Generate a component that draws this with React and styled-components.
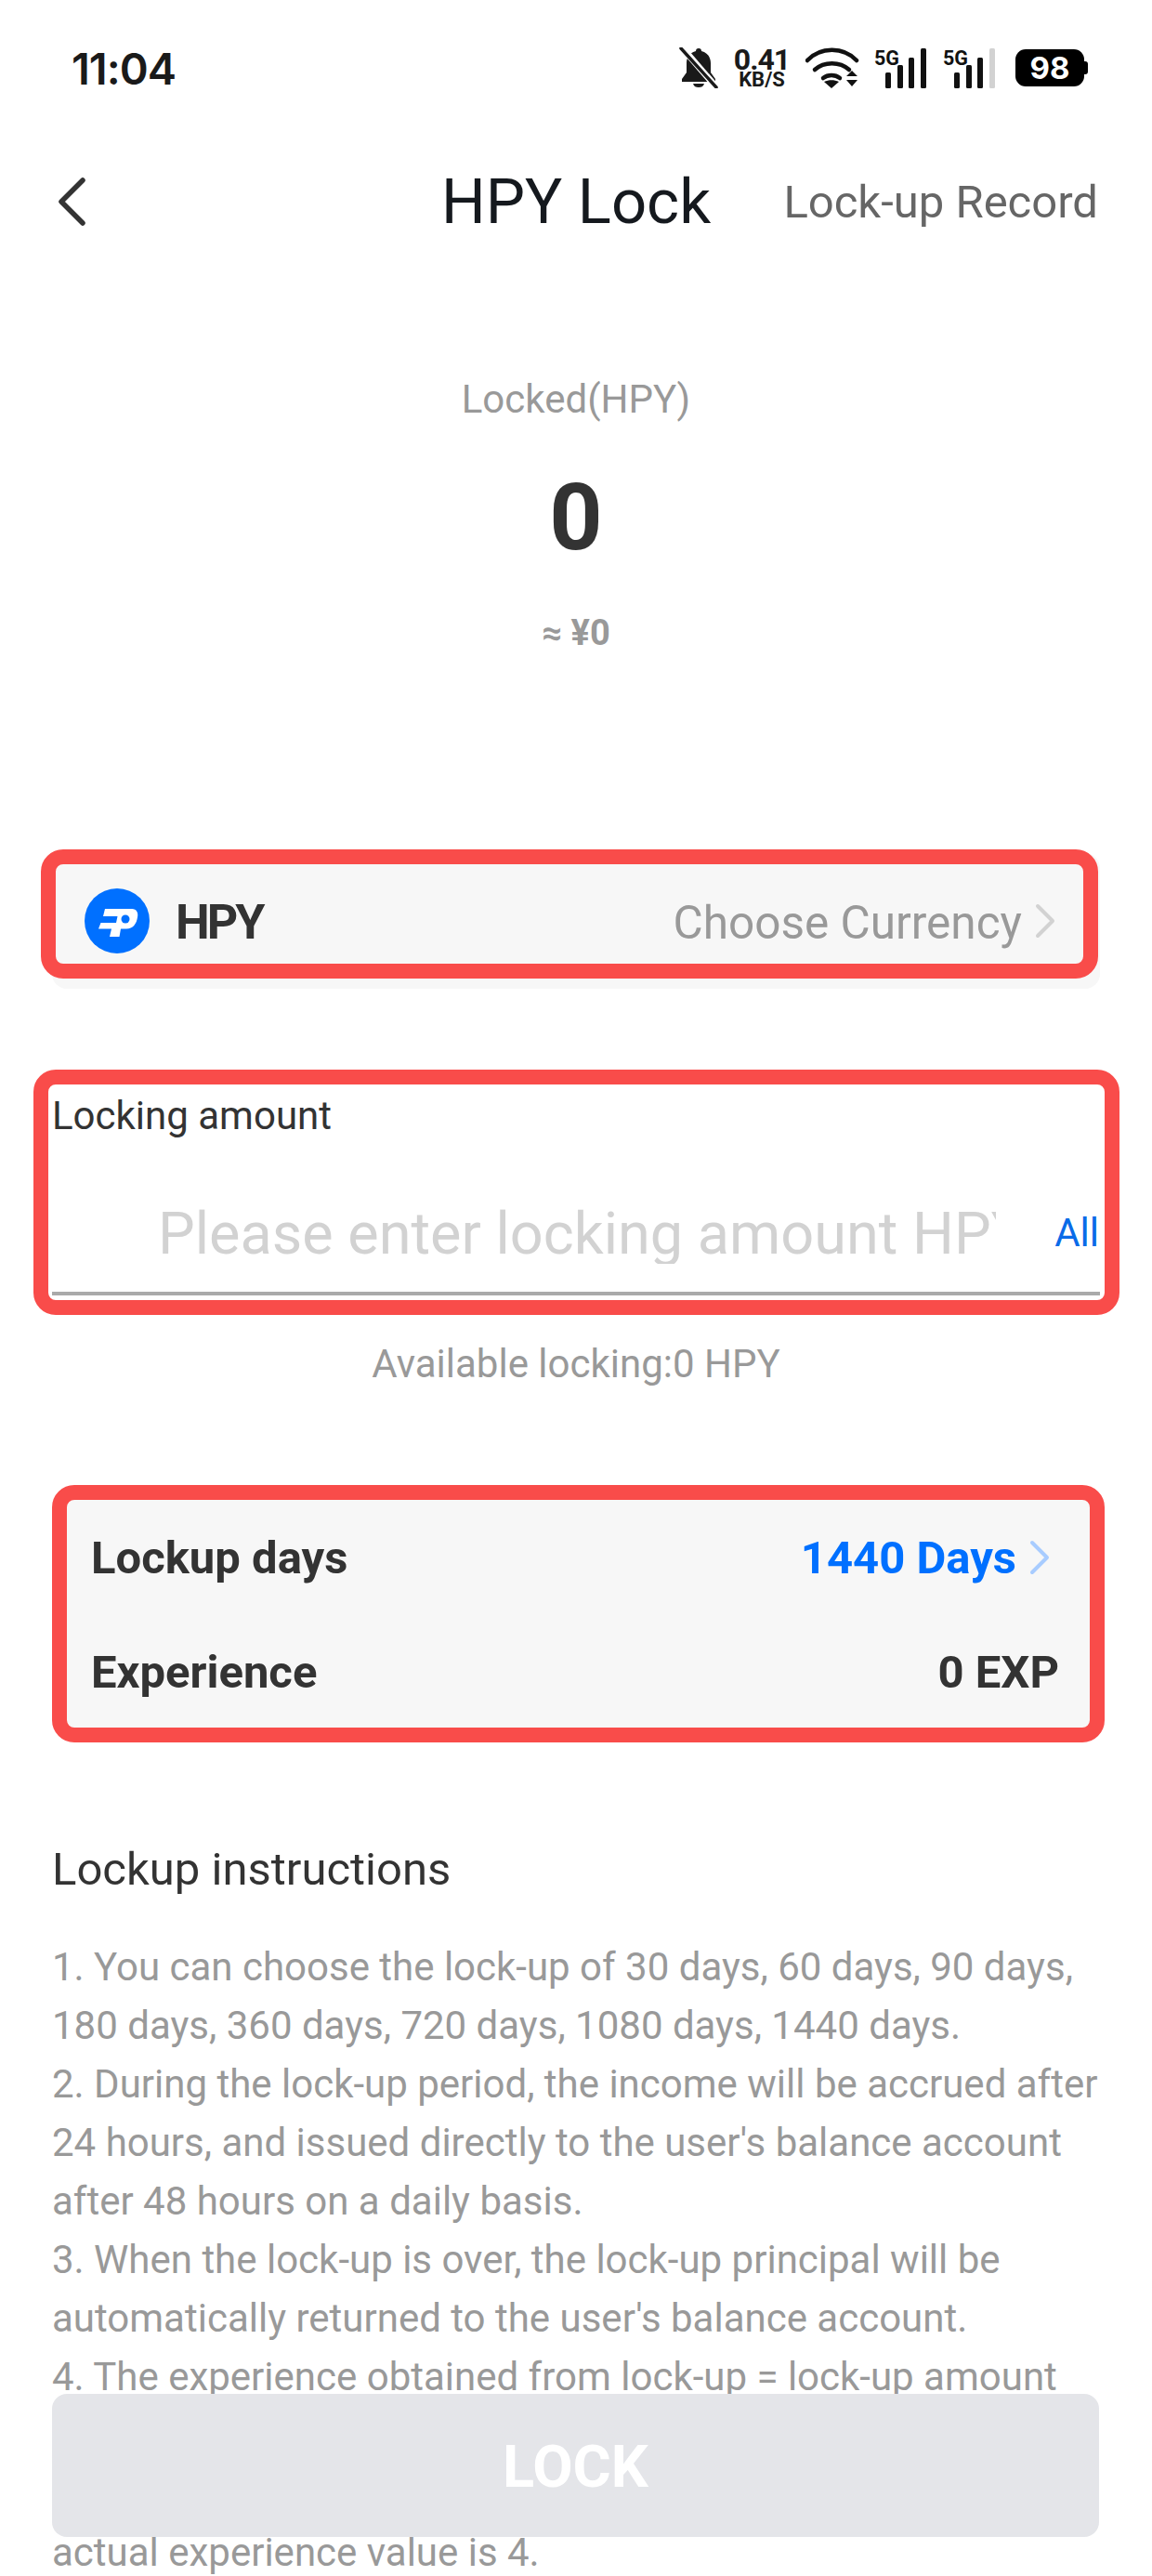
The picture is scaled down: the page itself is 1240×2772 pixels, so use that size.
import styled, { createGlobalStyle } from 'styled-components';

const GlobalStyle = createGlobalStyle`
	html, body {
		margin: 0;
		padding: 0;
		background: #fff;
	}
	* {
		box-sizing: border-box;
	}
`;

const BellOff = () => (
	<svg width="42" height="44" viewBox="0 0 42 44">
		<path d="M21 1c2 0 3 1 3 3 6 1.500 10 6 10 13v10l5 7v3H3v-3l5-7V17C8 10 12 5.500 18 4c0-2 1-3 3-3z" fill="#1a1a1a" />
		<path d="M15 39h12c-1 3-3 4-6 4s-5-1-6-4z" fill="#1a1a1a" />
		<path d="M3 0l38 44" stroke="#fff" strokeWidth="7" />
		<path d="M2 1l38 42" stroke="#1a1a1a" strokeWidth="3.500" strokeLinecap="round" />
	</svg>
);

const Wifi = () => (
	<svg width="58" height="44" viewBox="0 0 58 44">
		<g fill="none" stroke="#111" strokeWidth="4.500" strokeLinecap="round">
			<path d="M2 14C16-1 41-1 55 14" />
			<path d="M10 24c10-9 27-9 37 0" />
			<path d="M19 33c5-4 13-4 18 0" />
		</g>
		<path d="M20 37c5-2.500 11-2.500 16 0l-8 7z" fill="#111" />
		<path d="M50 25l6 6H44z M44 35h12l-6 7z" fill="#111" />
	</svg>
);

const Signal = ({ dim }) => (
	<svg width="58" height="44" viewBox="0 0 58 44">
		<text x="0" y="19" fontFamily="Roboto, sans-serif" fontWeight="700" fontSize="22" textLength="27" lengthAdjust="spacingAndGlyphs" fill="#111">5G</text>
		<rect x="12" y="27" width="6" height="17" rx="1.500" fill="#111" />
		<rect x="25" y="19" width="6" height="25" rx="1.500" fill="#111" />
		<rect x="37" y="11" width="6" height="33" rx="1.500" fill="#111" />
		<rect x="50" y="1" width="6" height="43" rx="1.500" fill={dim ? '#d2d2d2' : '#111'} />
	</svg>
);

const ChevronLeft = () => (
	<svg width="32" height="52" viewBox="0 0 32 52">
		<path d="M28 3L5 26l23 23" fill="none" stroke="#333" strokeWidth="5.500" strokeLinecap="round" strokeLinejoin="round" />
	</svg>
);

const ChevronRight = ({ color }) => (
	<svg width="22" height="38" viewBox="0 0 22 38">
		<path d="M3 3l16 16L3 35" fill="none" stroke={color} strokeWidth="4" strokeLinecap="round" strokeLinejoin="round" />
	</svg>
);

const HpyLogo = () => (
	<svg width="70" height="70" viewBox="0 0 70 70">
		<circle cx="35" cy="35" r="35" fill="#0070ff" />
		<path d="M22 22H51C56 22 58 26 57 31C56 38 52 43.500 45 43.500H39L37.500 52H27L29 43.500H15L17.500 37H34L35.500 30H20Z" fill="#fff" />
		<circle cx="44" cy="33" r="4.500" fill="#0070ff" />
	</svg>
);

const Page = styled.div`
	position: relative;
	width: 1240px;
	height: 2772px;
	overflow: hidden;
	background: #fff;
	font-family: Roboto, 'Liberation Sans', sans-serif;
`;

const StatusBar = styled.div`
	height: 44px;
	margin-top: 51px;
	padding: 0 73px 0 77px;
	display: flex;
	align-items: center;
	justify-content: space-between;
`;

const Time = styled.div`
	font-family: Inter, sans-serif;
	font-size: 47px;
	font-weight: 600;
	letter-spacing: -1px;
	color: #1a1a1a;
`;

const StatusIcons = styled.div`
	display: flex;
	align-items: center;
	gap: 16px;
`;

const Speed = styled.div`
	display: flex;
	flex-direction: column;
	align-items: center;
	color: #1a1a1a;
	font-weight: 700;
	width: 62px;
`;

const SpeedValue = styled.span`
	font-size: 32px;
	line-height: 26px;
	letter-spacing: -1px;
`;

const SpeedUnit = styled.span`
	font-size: 22px;
	line-height: 18px;
`;

const Battery = styled.div`
	position: relative;
	width: 74px;
	height: 40px;
	margin-left: 4px;
	border-radius: 11px;
	background: #000;
	color: #fff;
	font-family: Inter, sans-serif;
	font-size: 33px;
	font-weight: 700;
	display: flex;
	align-items: center;
	justify-content: center;

	&::after {
		content: '';
		position: absolute;
		right: -4px;
		top: 13px;
		width: 4px;
		height: 14px;
		border-radius: 0 3px 3px 0;
		background: #000;
	}
`;

const NavBar = styled.div`
	position: relative;
	height: 60px;
	margin-top: 92px;
	padding: 0 58px 0 61px;
	display: flex;
	align-items: center;
	justify-content: space-between;
`;

const NavTitle = styled.div`
	position: absolute;
	left: 0;
	right: 0;
	text-align: center;
	font-size: 67px;
	color: #15191e;
`;

const NavLink = styled.div`
	position: relative;
	font-size: 49px;
	color: #666;
`;

const Summary = styled.div`
	margin-top: 158px;
	display: flex;
	flex-direction: column;
	align-items: center;
`;

const SummaryLabel = styled.div`
	font-size: 42px;
	line-height: 50px;
	color: #999;
`;

const SummaryValue = styled.div`
	margin-top: 42px;
	font-size: 100px;
	line-height: 120px;
	font-weight: 700;
	color: #333;
`;

const SummaryFiat = styled.div`
	margin-top: 39px;
	font-size: 38px;
	line-height: 50px;
	font-weight: 700;
	color: #999;
`;

const Body = styled.div`
	margin-top: 212px;
	padding: 0 56px;
`;

const CurrencyCard = styled.div`
	position: relative;
	height: 146px;
	padding: 0 48px 0 35px;
	border-radius: 16px;
	background: #f7f7f7;
	display: flex;
	align-items: center;
	justify-content: space-between;
`;

const CurrencyName = styled.div`
	display: flex;
	align-items: center;
	gap: 28px;
	font-size: 52px;
	font-weight: 700;
	letter-spacing: -3px;
	line-height: 70px;
	color: #333;

	span {
		padding-top: 4px;
	}
`;

const CurrencyPick = styled.div`
	display: flex;
	align-items: center;
	gap: 14px;
	font-size: 49.500px;
	color: #999;

	span {
		padding-top: 3px;
	}
`;

const Highlight = styled.div`
	position: absolute;
	top: ${(p) => p.$top}px;
	left: ${(p) => p.$left}px;
	right: ${(p) => p.$right}px;
	bottom: ${(p) => p.$bottom}px;
	border: 16px solid #f94c4a;
	border-radius: 24px;
	pointer-events: none;
`;

const AmountBox = styled.div`
	position: relative;
	margin-top: 104px;
`;

const AmountLabel = styled.div`
	padding-top: 3px;
	font-size: 42px;
	line-height: 60px;
	color: #333;
`;

const AmountRow = styled.div`
	height: 163px;
	padding: 63px 1px 0 114px;
	border-bottom: 4px solid #aaa;
	display: flex;
	justify-content: space-between;
	align-items: flex-start;
`;

const AmountInput = styled.input`
	width: 902px;
	height: 66px;
	padding: 0;
	border: none;
	outline: none;
	background: transparent;
	font-family: inherit;
	font-size: 63px;
	color: #333;

	&::placeholder {
		color: #d2d2d2;
		opacity: 1;
	}
`;

const AllLink = styled.div`
	padding-top: 3px;
	font-size: 42px;
	line-height: 60px;
	color: #0a6be8;
`;

const Available = styled.div`
	margin-top: 44px;
	text-align: center;
	font-size: 42px;
	line-height: 60px;
	color: #999;
`;

const InfoCard = styled.div`
	position: relative;
	margin-top: 108px;
	padding: 40px 44px 38px 42px;
	border-radius: 16px;
	background: #f7f7f7;
	display: flex;
	flex-direction: column;
	gap: 63px;
`;

const InfoRow = styled.div`
	height: 60px;
	display: flex;
	align-items: center;
	justify-content: space-between;
	font-size: 49px;
	font-weight: 700;
	color: #333;
`;

const InfoValue = styled.div`
	display: flex;
	align-items: center;
	gap: 14px;
	color: ${(p) => p.$color || '#333'};

	svg {
		margin-right: 10px;
	}
`;

const Instructions = styled.div`
	margin-top: 115px;
`;

const InstructionsTitle = styled.div`
	font-size: 49px;
	line-height: 60px;
	color: #333;
`;

const InstructionsText = styled.div`
	margin-top: 43px;
	font-size: 42px;
	line-height: 63px;
	white-space: nowrap;
	color: #999;
`;

const LockButton = styled.div`
	position: absolute;
	left: 56px;
	top: 2576px;
	width: 1127px;
	height: 154px;
	padding-top: 2px;
	border-radius: 16px;
	background: #e4e5e9;
	color: #fff;
	font-size: 63px;
	font-weight: 700;
	display: flex;
	align-items: center;
	justify-content: center;
`;

export default function App() {
	return (
		<Page>
			<GlobalStyle />
			<StatusBar>
				<Time>11:04</Time>
				<StatusIcons>
					<BellOff />
					<Speed>
						<SpeedValue>0.41</SpeedValue>
						<SpeedUnit>KB/S</SpeedUnit>
					</Speed>
					<Wifi />
					<Signal />
					<Signal dim />
					<Battery>98</Battery>
				</StatusIcons>
			</StatusBar>

			<NavBar>
				<ChevronLeft />
				<NavTitle>HPY Lock</NavTitle>
				<NavLink>Lock-up Record</NavLink>
			</NavBar>

			<Summary>
				<SummaryLabel>Locked(HPY)</SummaryLabel>
				<SummaryValue>0</SummaryValue>
				<SummaryFiat>≈ ¥0</SummaryFiat>
			</Summary>

			<Body>
				<CurrencyCard>
					<CurrencyName>
						<HpyLogo />
						<span>HPY</span>
					</CurrencyName>
					<CurrencyPick>
						<span>Choose Currency</span>
						<ChevronRight color="#d2d2d2" />
					</CurrencyPick>
					<Highlight $top={-4} $left={-12} $right={2} $bottom={11} />
				</CurrencyCard>

				<AmountBox>
					<AmountLabel>Locking amount</AmountLabel>
					<AmountRow>
						<AmountInput placeholder="Please enter locking amount HPY" />
						<AllLink>All</AllLink>
					</AmountRow>
					<Highlight $top={-17} $left={-20} $right={-21} $bottom={-21} />
				</AmountBox>
				<Available>Available locking:0 HPY</Available>

				<InfoCard>
					<InfoRow>
						Lockup days
						<InfoValue $color="#0070ff">
							1440 Days
							<ChevronRight color="#a8ccff" />
						</InfoValue>
					</InfoRow>
					<InfoRow>
						Experience
						<InfoValue>0 EXP</InfoValue>
					</InfoRow>
					<Highlight $top={-8} $left={0} $right={-5} $bottom={-8} />
				</InfoCard>

				<Instructions>
					<InstructionsTitle>Lockup instructions</InstructionsTitle>
					<InstructionsText>
						1. You can choose the lock-up of 30 days, 60 days, 90 days,
						<br />
						180 days, 360 days, 720 days, 1080 days, 1440 days.
						<br />
						2. During the lock-up period, the income will be accrued after
						<br />
						24 hours, and issued directly to the user's balance account
						<br />
						after 48 hours on a daily basis.
						<br />
						3. When the lock-up is over, the lock-up principal will be
						<br />
						automatically returned to the user's balance account.
						<br />
						4. The experience obtained from lock-up = lock-up amount
						<br />
						<br />
						<br />
						actual experience value is 4.
					</InstructionsText>
				</Instructions>
			</Body>

			<LockButton>LOCK</LockButton>
		</Page>
	);
}
